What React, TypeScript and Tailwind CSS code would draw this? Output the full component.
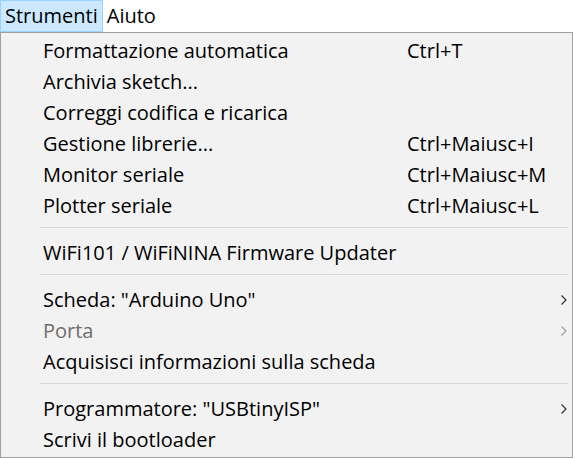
type Item =
  | { sep: true }
  | { sep?: false; label: string; shortcut?: string; sub?: boolean; disabled?: boolean }

const ITEMS: Item[] = [
  { label: 'Formattazione automatica', shortcut: 'Ctrl+T' },
  { label: 'Archivia sketch...' },
  { label: 'Correggi codifica e ricarica' },
  { label: 'Gestione librerie...', shortcut: 'Ctrl+Maiusc+I' },
  { label: 'Monitor seriale', shortcut: 'Ctrl+Maiusc+M' },
  { label: 'Plotter seriale', shortcut: 'Ctrl+Maiusc+L' },
  { sep: true },
  { label: 'WiFi101 / WiFiNINA Firmware Updater' },
  { sep: true },
  { label: 'Scheda: "Arduino Uno"', sub: true },
  { label: 'Porta', sub: true, disabled: true },
  { label: 'Acquisisci informazioni sulla scheda' },
  { sep: true },
  { label: 'Programmatore: "USBtinyISP"', sub: true },
  { label: 'Scrivi il bootloader' },
]

function Chevron({ disabled }: { disabled?: boolean }) {
  return (
    <svg width="8" height="12" viewBox="0 0 8 12" className={disabled ? 'text-[#a0a0a0]' : 'text-[#333]'}>
      <path d="M1.5 1.5 L6 6 L1.5 10.5" fill="none" stroke="currentColor" strokeWidth="1.2" />
    </svg>
  )
}

export default function App() {
  return (
    <div className="w-[573px] h-[458px] bg-white text-black text-[20px] font-['Open_Sans',sans-serif] overflow-hidden">
      <div className="flex h-[32px] items-stretch">
        <div className="px-[4px] bg-[#cce8ff] border border-[#99d1ff] flex items-center leading-none">Strumenti</div>
        <div className="px-[4px] flex items-center leading-none">Aiuto</div>
      </div>
      <div className="w-[573px] h-[426px] bg-[#f2f2f2] border border-[#a0a0a0] py-[2px]">
        {ITEMS.map((it, i) =>
          it.sep ? (
            <div key={i} className="h-[16px] pt-[6px] pl-[39px] pr-[4px]">
              <div className="h-px bg-[#d7d7d7]" />
            </div>
          ) : (
            <div key={i} className={`h-[31px] flex items-center pl-[42px] pr-[4px] whitespace-nowrap ${it.disabled ? 'text-[#6d6d6d]' : ''}`}>
              <span className="w-[364px] shrink-0">{it.label}</span>
              <span className="flex-1">{it.shortcut}</span>
              {it.sub ? <Chevron disabled={it.disabled} /> : null}
            </div>
          )
        )}
      </div>
    </div>
  )
}
